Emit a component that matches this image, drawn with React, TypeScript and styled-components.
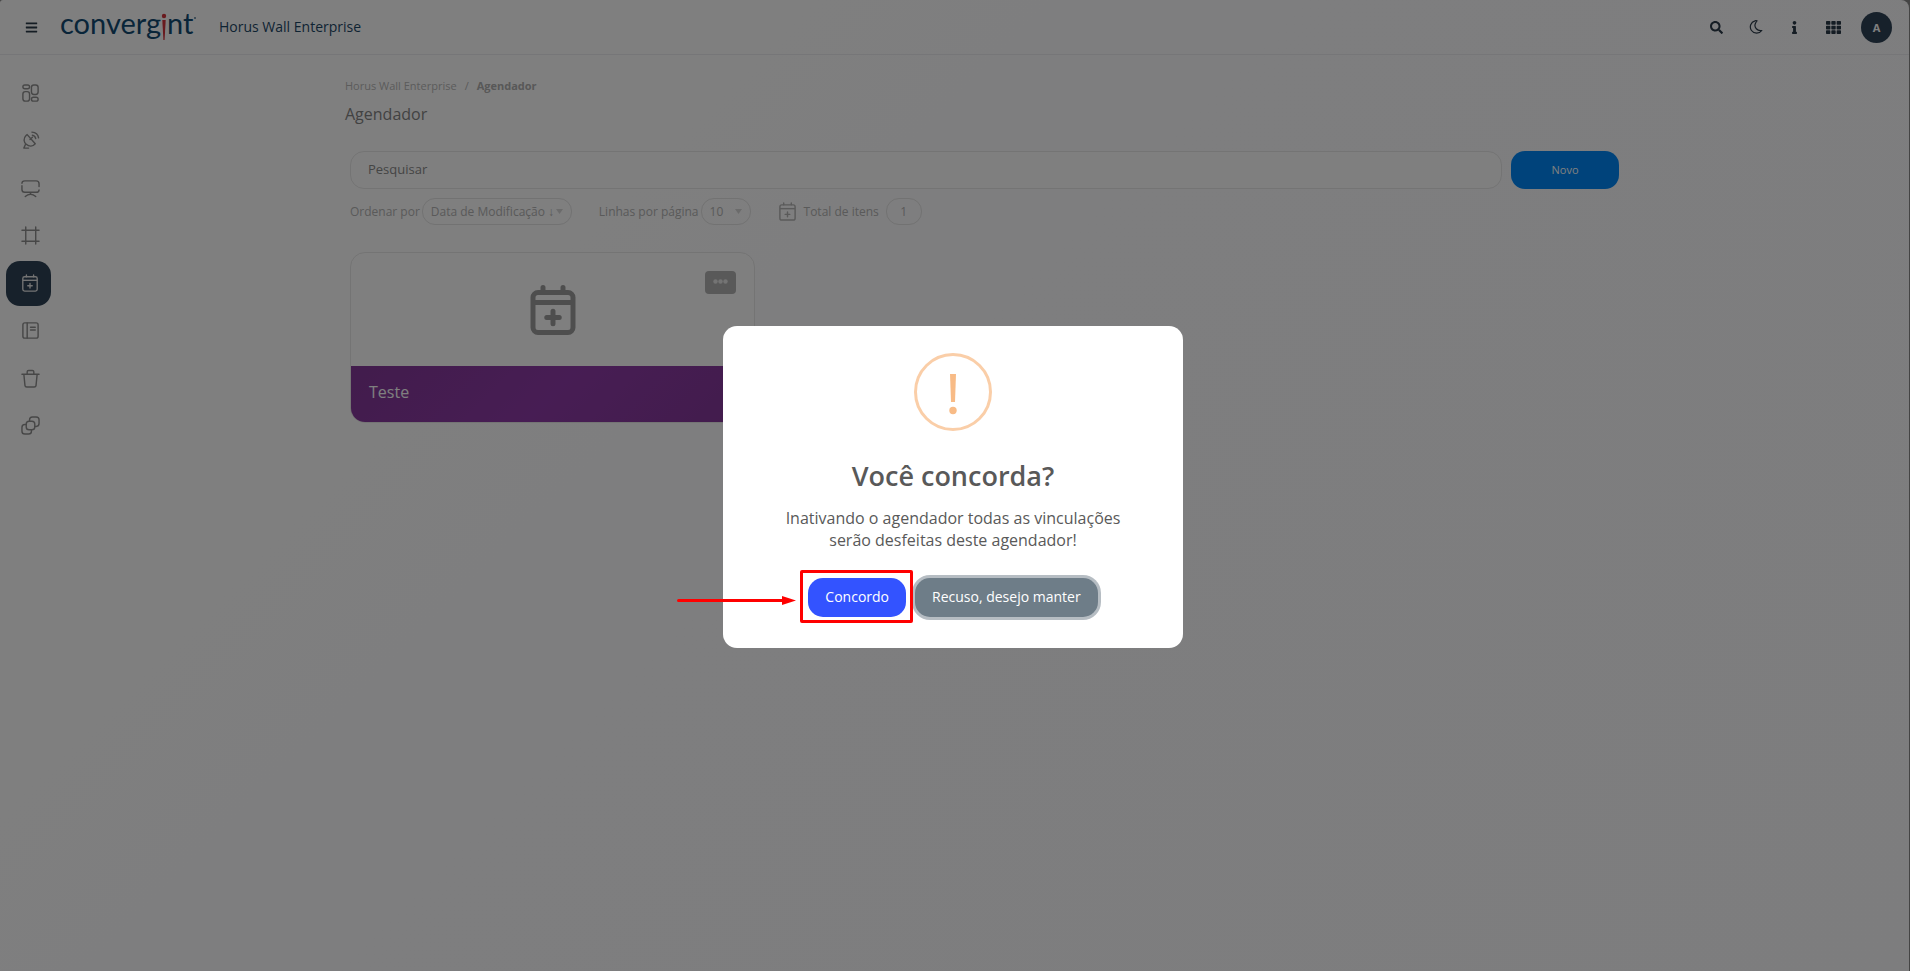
import React from 'react';
import styled, { createGlobalStyle } from 'styled-components';
import { FaBars, FaSearch, FaInfo, FaTh } from 'react-icons/fa';

const GlobalStyle = createGlobalStyle`
  *, *::before, *::after { box-sizing: border-box; }
  body {
    margin: 0;
    background: #888;
    font-family: 'Open Sans', 'Liberation Sans', sans-serif;
    font-size: 12px;
    color: #b4b4b4;
  }
  button, input, select { font-family: inherit; }
`;

const Page = styled.div`
  display: flex;
  flex-direction: column;
  min-height: 100vh;
  margin-right: 1px;
  border-radius: 3px 8px 0 0;
  background: linear-gradient(135deg, #fff 0%, #fff 20%, #fcfcfe 45%, #fbfbfd 100%);
`;

const Header = styled.header`
  display: flex;
  align-items: center;
  height: 55px;
  padding: 0 17px 0 25px;
  border-bottom: 1px solid #ececf0;
  color: #2b3a49;
`;

const IconButton = styled.button`
  display: grid;
  place-items: center;
  padding: 0;
  border: 0;
  background: none;
  color: inherit;
  cursor: pointer;
`;

const Logo = styled.a`
  display: flex;
  margin-left: 22px;
  width: 138px;
`;

const ProductName = styled.span`
  margin-left: 21px;
  font-size: 14px;
  font-weight: 500;
  line-height: 20px;
  color: #1d4767;
`;

const HeaderTools = styled.div`
  display: flex;
  align-items: center;
  gap: 16px;
  margin-left: auto;
  ${IconButton} { width: 23px; height: 23px; }
`;

const Avatar = styled.button`
  width: 31px;
  height: 31px;
  margin-top: 1px;
  padding: 0;
  border: 0;
  border-radius: 50%;
  background: #2e4256;
  color: #fff;
  font-size: 11px;
  font-weight: 700;
`;

const Body = styled.div`
  display: flex;
  flex: 1;
`;

const Sidebar = styled.nav`
  display: flex;
  flex-direction: column;
  justify-content: space-between;
  width: 60px;
  height: 393px;
  padding: 16px 0 0 6px;
`;

const NavItem = styled.a<{ $active?: boolean }>`
  display: grid;
  place-items: center;
  width: 45px;
  height: 45px;
  padding-left: 3px;
  border-radius: 14px;
  background: ${p => (p.$active ? '#2e4256' : 'transparent')};
  color: ${p => (p.$active ? '#e6e6e6' : '#8f8f8f')};
`;

const Main = styled.main`
  flex: 1;
  max-width: 1279px;
  margin: 0 auto;
`;

const Breadcrumb = styled.nav`
  display: flex;
  gap: 8px;
  padding-top: 23px;
  font-size: 11px;
  line-height: 16px;
  a { color: #b8b8b8; text-decoration: none; }
  strong { color: #b0b0b0; }
`;

const Title = styled.h1`
  margin: 8px 0 0;
  font-size: 16px;
  font-weight: 400;
  line-height: 24px;
  color: #858585;
`;

const Content = styled.div`
  padding: 25px 5px;
`;

const SearchRow = styled.form`
  display: flex;
  gap: 9px;
`;

const SearchInput = styled.input`
  flex: 1;
  height: 38px;
  padding: 0 17px 2px;
  border: 1px solid #e8e8e8;
  border-radius: 14px;
  background: #fff;
  font-size: 13px;
  &::placeholder { color: #8a8a8a; opacity: 1; }
`;

const NewButton = styled.button`
  width: 108px;
  padding: 0 0 2px;
  border: 0;
  border-radius: 14px;
  background: #0087f7;
  color: #fff;
  font-size: 11px;
`;

const Filters = styled.div`
  display: flex;
  align-items: center;
  gap: 27px;
  margin-top: 9px;
  line-height: 16px;
`;

const Field = styled.div<{ $gap?: number }>`
  display: flex;
  align-items: center;
  gap: ${p => p.$gap ?? 2}px;
`;

const SelectWrap = styled.span`
  position: relative;
  display: flex;
  svg { position: absolute; right: 9px; top: 11px; pointer-events: none; }
`;

const Select = styled.select<{ $width: number }>`
  width: ${p => p.$width}px;
  height: 27px;
  padding: 0 8px;
  border: 1px solid #e4e4e4;
  border-radius: 13px;
  background: transparent;
  color: #b4b4b4;
  font-size: 12px;
  appearance: none;
`;

const Count = styled.output`
  width: 36px;
  border: 1px solid #e4e4e4;
  border-radius: 13px;
  text-align: center;
  line-height: 25px;
`;

const CardGrid = styled.section`
  display: grid;
  grid-template-columns: repeat(3, 1fr);
  gap: 27px;
  margin-top: 27px;
`;

const Card = styled.article`
  overflow: hidden;
  border: 1px solid #e8e8e8;
  border-radius: 15px;
  background: #fff;
`;

const CardTop = styled.div`
  position: relative;
  display: grid;
  place-items: center;
  height: 113px;
  color: #9c9c9c;
`;

const CardMenu = styled.button`
  position: absolute;
  top: 18px;
  right: 18px;
  display: grid;
  place-items: center;
  width: 31px;
  height: 23px;
  padding: 0 0 2px;
  border: 0;
  border-radius: 4px;
  background: #b2b2b2;
  color: #e8e8e8;
`;

const CardName = styled.h2`
  margin: 0;
  padding: 0 18px 4px;
  background: linear-gradient(135deg, #843899, #8f3ba8 50%, #843899);
  color: #fff;
  font-size: 16px;
  font-weight: 400;
  line-height: 52px;
`;

const Overlay = styled.div`
  position: fixed;
  inset: 0;
  display: grid;
  place-items: center;
  padding: 3px 4px 0 0;
  background: rgba(0, 0, 0, 0.5);
`;

const Dialog = styled.div`
  position: relative;
  display: flex;
  flex-direction: column;
  align-items: center;
  width: 460px;
  padding: 27px 48px 31px;
  border-radius: 14px;
  background: #fff;
  text-align: center;
`;

const DialogTitle = styled.h2`
  margin: 26px 0 0;
  font-size: 27px;
  font-weight: 600;
  line-height: 38px;
  color: #595959;
`;

const DialogText = styled.p`
  margin: 12px 0 0;
  font-size: 16px;
  line-height: 22px;
  color: #595959;
`;

const Actions = styled.div`
  display: flex;
  gap: 9px;
  margin-top: 27px;
`;

const ActionButton = styled.button<{ $focused?: boolean }>`
  height: 39px;
  padding: 0 17px 2px;
  border: 0;
  border-radius: 15px;
  background: ${p => (p.$focused ? '#6e7d88' : '#3353ff')};
  box-shadow: ${p => (p.$focused ? '0 0 0 3px #b6bdc3' : 'none')};
  color: #fff;
  font-size: 14px;
  font-weight: 500;
`;

const Highlight = styled.span`
  position: relative;
  z-index: 1;
  display: flex;
  &::after {
    content: '';
    position: absolute;
    inset: -8px -7px -6px -8px;
    border: 3px solid #f00;
    border-radius: 2px;
    pointer-events: none;
  }
`;

const Arrow = styled.svg`
  position: absolute;
  right: calc(100% + 12px);
  top: 18px;
`;

const CalendarPlus = ({ size, stroke = 2 }: { size: number; stroke?: number }) => (
  <svg width={size} height={size} viewBox="0 0 20 20" fill="none" stroke="currentColor" strokeWidth={stroke} strokeLinecap="round">
    <rect x="2" y="3" width="16" height="16" rx="2" />
    <path d="M2 7h16" strokeLinecap="butt" />
    <path d="M6 1v2M14 1v2M10 10.5v5M7.500 13h5" />
  </svg>
);

const navIcons: { label: string; art: React.ReactNode }[] = [
  { label: 'Painel', art: <><rect x="2" y="1" width="7" height="4" rx="2" /><rect x="2" y="8" width="7" height="10" rx="2.500" /><rect x="11" y="1" width="7" height="10" rx="2.500" /><rect x="11" y="14" width="7" height="4" rx="2" /></> },
  { label: 'Transmissão', art: <><path d="M5.500 4.500C2 8 3 12 5.500 14c3 2.500 7 2.500 9.500-.5L6.500 3.800zM9.500 9l2.500-2.500M5 13.500 3 18h5M12 4.500c2 .3 3 1.500 3.500 3.500M11.500 1.200c4 .3 6.500 2.800 7 6" /></> },
  { label: 'Telas', art: <><path d="M4 2h12c2 0 3 1 3 3v3M19 11.500c0 1.700-1 2.500-3 2.500H4c-2 0-3-1-3-3V7M1 4.500C1 3 2 2 4 2M10 14v2M4.500 18.500C6 17 8 16 10 16s4 1 5.500 2.500" /></> },
  { label: 'Quadros', art: <path d="M5 1v18M15.500 1v18M1 4.500h18M1 16h18" /> },
  { label: 'Agendador', art: null },
  { label: 'Relatórios', art: <><rect x="2" y="2" width="16" height="16" rx="2" /><path d="M6.500 2v16M10 6.500h5M10 9.500h5" /></> },
  { label: 'Lixeira', art: <path d="M1 5.500h18M6.500 5.500V3c0-1 .5-1.500 1.500-1.500h4c1 0 1.500.5 1.500 1.500v2.500M3 5.500l1.200 12c.1 1 .8 1.500 1.800 1.500h8c1 0 1.700-.5 1.800-1.500L17 5.500" /> },
  { label: 'Grupos', art: <><rect x="5.500" y="5.500" width="9" height="9" rx="3" /><path d="M9 5.500V4c0-2 1-3 3-3h4c2 0 3 1 3 3v4c0 2-1 3-3 3h-1.500M5.500 9H4c-2 0-3 1-3 3v4c0 2 1 3 3 3h4c2 0 3-1 3-3v-1.500" /></> },
];

const Caret = () => (
  <svg width="7" height="5" viewBox="0 0 7 5"><path d="M0 0h7L3.500 5z" fill="#d6d6d6" /></svg>
);

export default function App() {
  return (
    <>
      <GlobalStyle />
      <Page>
        <Header>
          <IconButton aria-label="Menu"><FaBars size={13} /></IconButton>
          <Logo href="#" aria-label="Convergint">
            <svg width="138" height="46" viewBox="0 0 138 46">
              <g fill="#124b72" fontFamily="Lato, sans-serif" fontSize="29">
                <text x="0" y="30">converg</text>
                <text x="107" y="30">nt</text>
              </g>
              <circle cx="104" cy="12" r="2.200" fill="#d3343d" />
              <path d="M102.300 16h3.400l-1.100 20h-1.200z" fill="#d3343d" />
              <circle cx="135" cy="14" r="1" fill="#5d7f98" />
            </svg>
          </Logo>
          <ProductName>Horus Wall Enterprise</ProductName>
          <HeaderTools>
            <IconButton aria-label="Pesquisar"><FaSearch size={13} /></IconButton>
            <IconButton aria-label="Tema escuro">
              <svg width="14" height="14" viewBox="0 0 14 14" fill="none" stroke="currentColor" strokeWidth="1.200" strokeLinejoin="round">
                <path d="M6 .8A6.300 6.300 0 1 0 12.800 10.500C8.500 11.300 4.500 7.500 6.500 3.200 6.900 2.300 7.400 1.500 8 .8 7.300.6 6.600.6 6 .8z" />
              </svg>
            </IconButton>
            <IconButton aria-label="Informações"><FaInfo size={13} /></IconButton>
            <IconButton aria-label="Aplicativos"><FaTh size={15} /></IconButton>
            <Avatar aria-label="Conta">A</Avatar>
          </HeaderTools>
        </Header>
        <Body>
          <Sidebar aria-label="Principal">
            {navIcons.map(({ label, art }) => (
              <NavItem key={label} href="#" aria-label={label} $active={!art}>
                {art ? (
                  <svg width="19" height="19" viewBox="0 0 20 20" fill="none" stroke="currentColor" strokeWidth="1.500" strokeLinecap="round" strokeLinejoin="round">{art}</svg>
                ) : (
                  <CalendarPlus size={18} stroke={1.5} />
                )}
              </NavItem>
            ))}
          </Sidebar>
          <Main>
            <Breadcrumb aria-label="Trilha">
              <a href="#">Horus Wall Enterprise</a>
              <span>/</span>
              <strong>Agendador</strong>
            </Breadcrumb>
            <Title>Agendador</Title>
            <Content>
              <SearchRow>
                <SearchInput type="search" aria-label="Pesquisar" placeholder="Pesquisar" />
                <NewButton type="button">Novo</NewButton>
              </SearchRow>
              <Filters>
                <Field>
                  <label htmlFor="order">Ordenar por</label>
                  <SelectWrap>
                    <Select id="order" $width={150}><option>Data de Modificação ↓</option></Select>
                    <Caret />
                  </SelectWrap>
                </Field>
                <Field>
                  <label htmlFor="rows">Linhas por página</label>
                  <SelectWrap>
                    <Select id="rows" $width={50}><option>10</option></Select>
                    <Caret />
                  </SelectWrap>
                </Field>
                <Field $gap={7}>
                  <CalendarPlus size={19} stroke={1.5} />
                  <label htmlFor="total">Total de itens</label>
                  <Count id="total">1</Count>
                </Field>
              </Filters>
              <CardGrid>
                <Card>
                  <CardTop>
                    <CalendarPlus size={50} />
                    <CardMenu aria-label="Opções">
                      <svg width="15" height="5" viewBox="0 0 15 5" fill="currentColor">
                        <circle cx="2.500" cy="2.500" r="2.200" /><circle cx="7.500" cy="2.500" r="2.200" /><circle cx="12.500" cy="2.500" r="2.200" />
                      </svg>
                    </CardMenu>
                  </CardTop>
                  <CardName>Teste</CardName>
                </Card>
              </CardGrid>
            </Content>
          </Main>
        </Body>
      </Page>
      <Overlay>
        <Dialog role="dialog" aria-modal="true" aria-labelledby="dialog-title">
          <svg width="78" height="78" viewBox="0 0 78 78">
            <circle cx="39" cy="39" r="37.500" fill="none" stroke="#facea8" strokeWidth="3" />
            <path d="M36 21h6l-1 28h-4z" fill="#f8bb86" />
            <circle cx="39" cy="57.500" r="3.700" fill="#f8bb86" />
          </svg>
          <DialogTitle id="dialog-title">Você concorda?</DialogTitle>
          <DialogText>Inativando o agendador todas as vinculações serão desfeitas deste agendador!</DialogText>
          <Actions>
            <Highlight>
              <ActionButton>Concordo</ActionButton>
              <Arrow width="119" height="9" viewBox="0 0 119 9">
                <path d="M1.500 4.500h106" stroke="#f00" strokeWidth="3" strokeLinecap="round" />
                <path d="M105 0l14 4.500-14 4.500z" fill="#f00" />
              </Arrow>
            </Highlight>
            <ActionButton $focused>Recuso, desejo manter</ActionButton>
          </Actions>
        </Dialog>
      </Overlay>
    </>
  );
}
